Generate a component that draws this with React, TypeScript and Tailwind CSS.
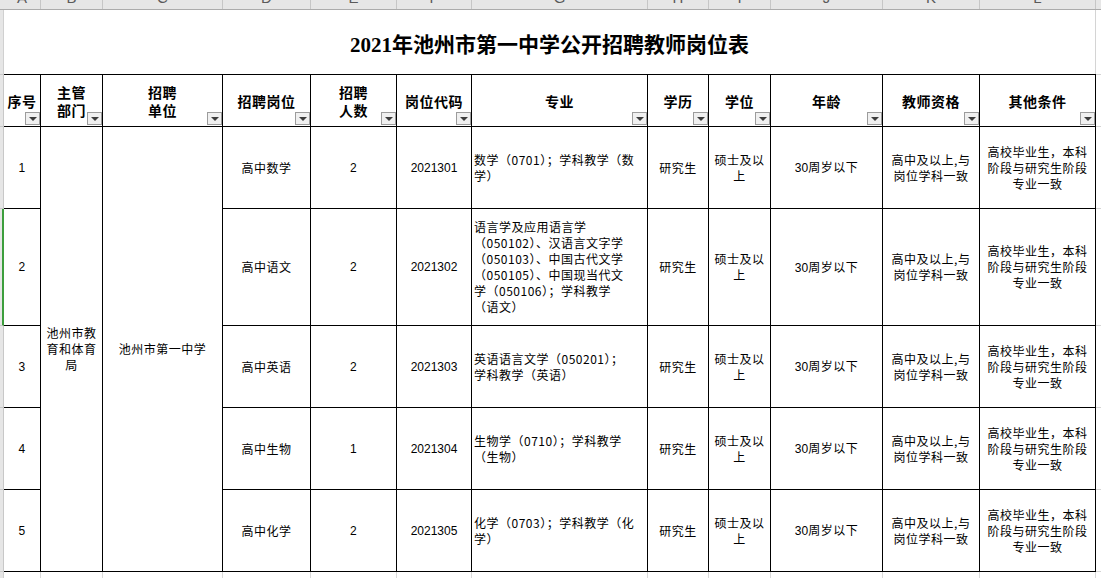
import React from "react";

const COLS = [37, 62, 120, 88, 86, 75, 176, 61, 62, 112, 97, 116];
const LETTERS = ["A", "B", "C", "D", "E", "F", "G", "H", "I", "J", "K", "L"];
const ROW_H = [82, 117, 82, 82, 82];

const CN = "font-['Noto_Sans_CJK_SC','Liberation_Sans',sans-serif]";

interface Post {
  no: number;
  pos: string;
  count: string;
  code: string;
  major: string[];
}

const POSTS: Post[] = [
  { no: 1, pos: "高中数学", count: "2", code: "2021301", major: ["数学（0701）；学科教学（数", "学）"] },
  {
    no: 2,
    pos: "高中语文",
    count: "2",
    code: "2021302",
    major: [
      "语言学及应用语言学",
      "（050102）、汉语言文字学",
      "（050103）、中国古代文学",
      "（050105）、中国现当代文",
      "学（050106）；学科教学",
      "（语文）",
    ],
  },
  { no: 3, pos: "高中英语", count: "2", code: "2021303", major: ["英语语言文学（050201）；", "学科教学（英语）"] },
  { no: 4, pos: "高中生物", count: "1", code: "2021304", major: ["生物学（0710）；学科教学", "（生物）"] },
  { no: 5, pos: "高中化学", count: "2", code: "2021305", major: ["化学（0703）；学科教学（化", "学）"] },
];

const FilterBtn = () => (
  <span className="absolute right-0 bottom-[1px] flex h-[13px] w-[15px] items-center justify-center border border-[#9c9c9c] bg-[#f0f0f0]">
    <span className="mt-[1px] h-0 w-0 border-x-[4px] border-t-[4px] border-x-transparent border-t-[#3c3c3c]" />
  </span>
);

const Head = ({ lines }: { lines: string[] }) => (
  <div
    className={`relative flex flex-col items-center justify-center border-r border-b border-black text-[14px] font-bold leading-[18px] text-black ${CN}`}
  >
    {lines.map((l) => (
      <span key={l} className="tracking-[0.5px]">
        {l}
      </span>
    ))}
    <FilterBtn />
  </div>
);

const Cell = ({ children, left }: { children: React.ReactNode; left?: boolean }) => (
  <div
    className={`flex flex-col justify-center border-r border-b border-black text-[12px] leading-[16px] tracking-[0.5px] text-black ${CN} ${
      left ? "items-start pl-[2px]" : "items-center text-center"
    }`}
  >
    {children}
  </div>
);

const Lines = ({ lines }: { lines: string[] }) => (
  <>
    {lines.map((l, i) => (
      <span key={i} className="whitespace-nowrap">
        {l}
      </span>
    ))}
  </>
);

export default function App() {
  return (
    <div className="relative h-[578px] w-[1101px] overflow-hidden bg-white">
      {/* column letters band */}
      <div className="flex h-[10px] border-b border-[#ababab] bg-[#e6e6e6]">
        <div className="w-[4px]" />
        {COLS.map((w, i) => (
          <div
            key={LETTERS[i]}
            style={{ width: w }}
            className="flex justify-center overflow-hidden border-r border-[#c6c6c6] font-['Liberation_Sans',sans-serif] text-[15px] leading-[15px] text-[#5a5a5a]"
          >
            <span className="-mt-[10px]">{LETTERS[i]}</span>
          </div>
        ))}
        <div className="flex-1" />
      </div>

      <div className="flex">
        {/* row header strip */}
        <div className="flex w-[4px] flex-col">
          <div className="h-[64px] border-r border-[#d0d0d0] bg-[#e6e6e6]" />
          <div className="h-[53px] border-r border-b border-t border-[#c8c8c8] bg-[#e6e6e6]" />
          {ROW_H.map((h, i) => (
            <div
              key={i}
              style={{ height: h }}
              className={`border-b bg-[#e6e6e6] ${
                i === 1 ? "border-r-2 border-r-[#3d9e3d] border-b-[#c8c8c8]" : "border-r border-[#c8c8c8]"
              }`}
            />
          ))}
          <div className="h-[10px] border-r border-[#d0d0d0] bg-[#e6e6e6]" />
        </div>

        {/* sheet */}
        <div className="w-[1092px]">
          <div className="flex h-[64px] items-center justify-center border-r border-[#d4d4d4] pt-[5px]">
            <h1 className="font-['Liberation_Serif','Noto_Sans_CJK_SC',serif] text-[21px] font-bold leading-[24px] text-black">
              2021年池州市第一中学公开招聘教师岗位表
            </h1>
          </div>

          <div className="grid grid-cols-[37px_62px_120px_88px_86px_75px_176px_61px_62px_112px_97px_116px] grid-rows-[52px_82px_117px_82px_82px_82px] border-t border-black">
            <Head lines={["序号"]} />
            <Head lines={["主管", "部门"]} />
            <Head lines={["招聘", "单位"]} />
            <Head lines={["招聘岗位"]} />
            <Head lines={["招聘", "人数"]} />
            <Head lines={["岗位代码"]} />
            <Head lines={["专业"]} />
            <Head lines={["学历"]} />
            <Head lines={["学位"]} />
            <Head lines={["年龄"]} />
            <Head lines={["教师资格"]} />
            <Head lines={["其他条件"]} />

            {POSTS.map((p, idx) => (
              <React.Fragment key={p.no}>
                <Cell>
                  <span className="font-['Liberation_Sans',sans-serif]">{p.no}</span>
                </Cell>
                {idx === 0 && (
                  <>
                    <div className={`row-span-5 flex flex-col items-center justify-center border-r border-b border-black text-[12px] leading-[16px] tracking-[0.5px] ${CN}`}>
                      <span>池州市教</span>
                      <span>育和体育</span>
                      <span>局</span>
                    </div>
                    <div className={`row-span-5 flex items-center justify-center border-r border-b border-black text-[12px] leading-[16px] tracking-[0.5px] ${CN}`}>
                      池州市第一中学
                    </div>
                  </>
                )}
                <Cell>{p.pos}</Cell>
                <Cell>
                  <span className="font-['Liberation_Sans',sans-serif]">{p.count}</span>
                </Cell>
                <Cell>
                  <span className="font-['Liberation_Sans',sans-serif] tracking-normal">{p.code}</span>
                </Cell>
                <Cell left>
                  <Lines lines={p.major} />
                </Cell>
                <Cell>研究生</Cell>
                <Cell>
                  <Lines lines={["硕士及以", "上"]} />
                </Cell>
                <Cell>
                  <span>
                    <span className="font-['Liberation_Sans',sans-serif] tracking-normal">30</span>周岁以下
                  </span>
                </Cell>
                <Cell>
                  <Lines lines={["高中及以上,与", "岗位学科一致"]} />
                </Cell>
                <Cell>
                  <Lines lines={["高校毕业生，本科", "阶段与研究生阶段", "专业一致"]} />
                </Cell>
              </React.Fragment>
            ))}
          </div>

          {/* empty gridline row below the table */}
          <div className="flex h-[10px]">
            {COLS.map((w, i) => (
              <div key={i} style={{ width: w }} className="border-r border-[#d9d9d9]" />
            ))}
          </div>
        </div>

        {/* area right of the table */}
        <div className="flex flex-1 flex-col">
          <div className="h-[65px] border-b border-[#d4d4d4]" />
          <div className="h-[52px] border-b border-[#d4d4d4]" />
          {ROW_H.map((h, i) => (
            <div key={i} style={{ height: h }} className="border-b border-[#d4d4d4]" />
          ))}
        </div>
      </div>
    </div>
  );
}
